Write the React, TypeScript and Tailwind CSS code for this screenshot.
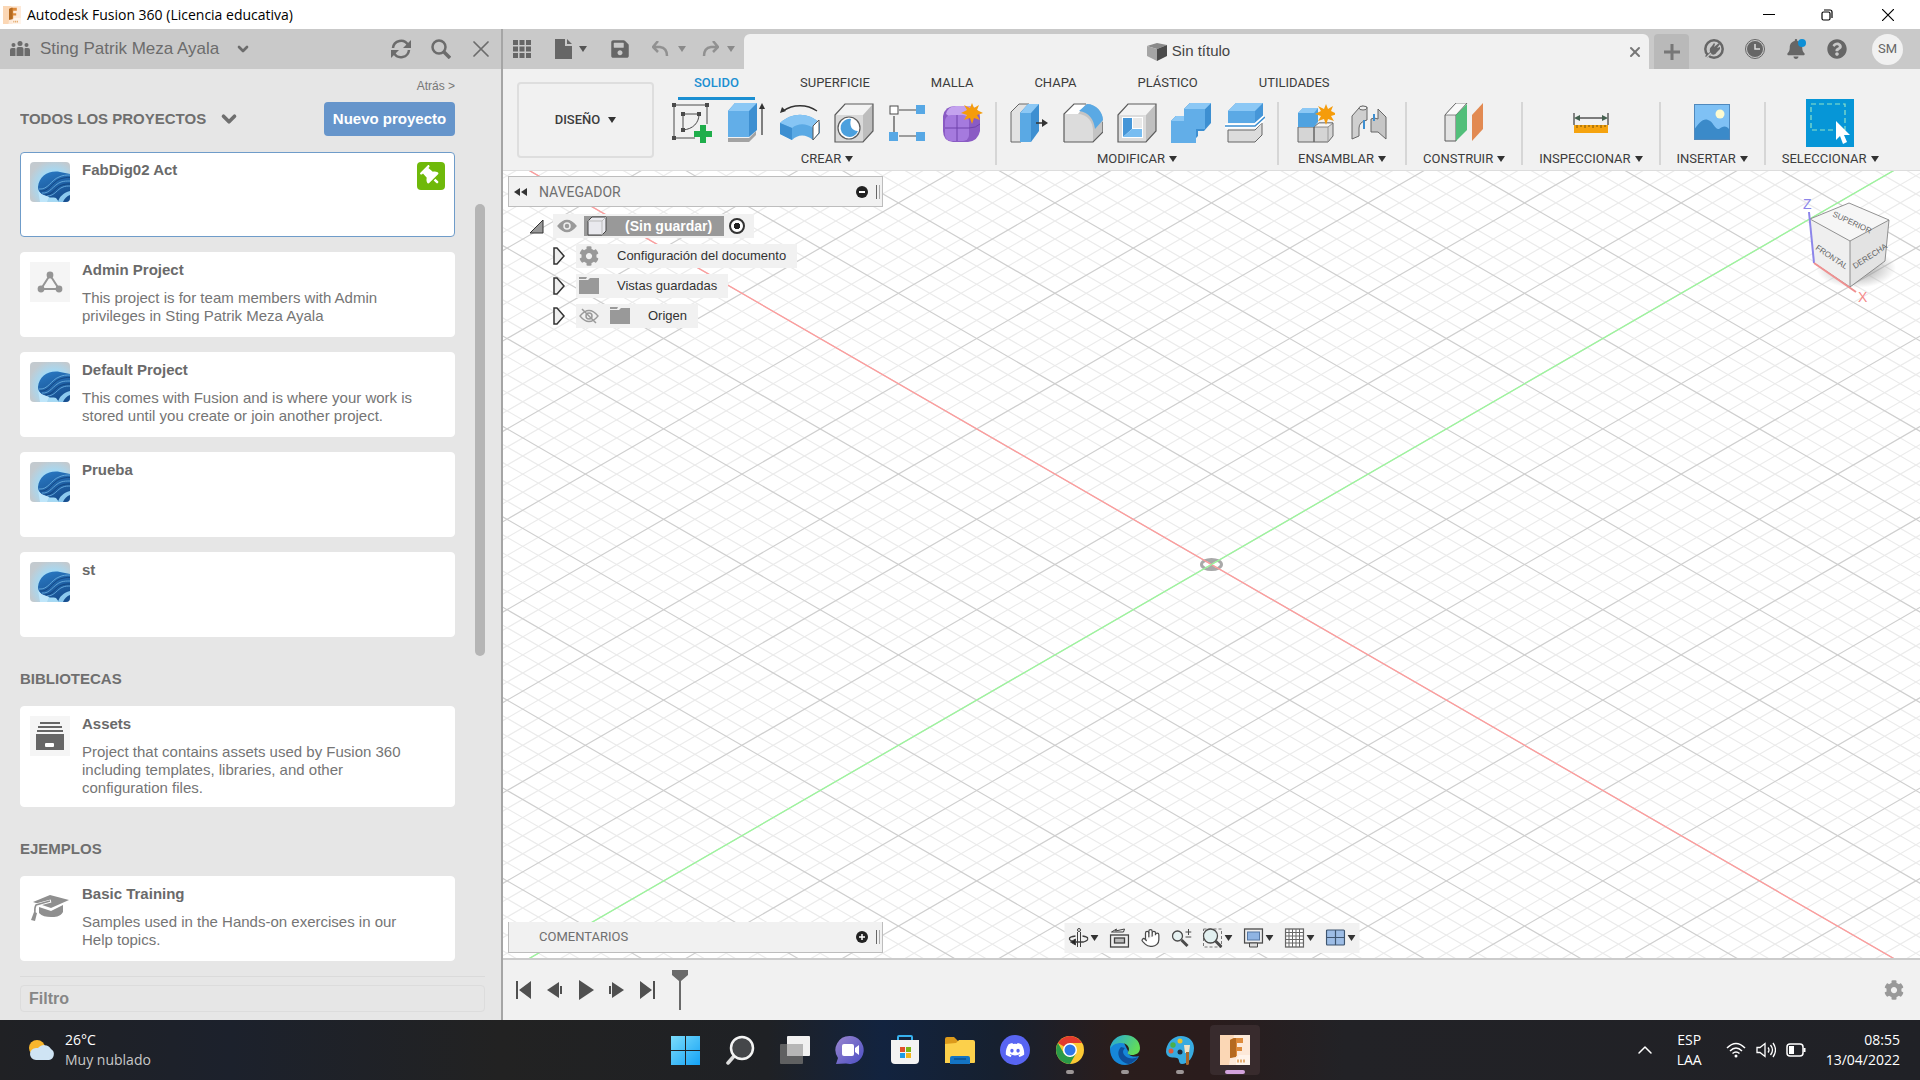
import React from 'react';
import { ChevronDown, ChevronUp, Hand, X } from 'lucide-react';
import { FaBell, FaCog, FaDiscord, FaQuestionCircle, FaSave } from 'react-icons/fa';
import { FaThumbtack } from 'react-icons/fa6';

type Drawing = () => React.ReactElement;

interface Project {
  name: string;
  description?: string;
  thumb: Drawing;
  pinned?: boolean;
}

interface ToolGroup {
  label: string;
  padding: string;
  tools: { name: string; icon: Drawing; active?: boolean }[];
}

/* ---------- Project thumbnails ---------- */

function WaveThumb() {
  return (
    <svg viewBox="0 0 40 40" className="h-10 w-10 rounded-sm">
      <defs>
        <radialGradient id="waveBg" cx="0.6" cy="0.6" r="0.65">
          <stop offset="0.55" stopColor="#a3daf6" />
          <stop offset="1" stopColor="#c3cacf" />
        </radialGradient>
        <linearGradient id="waveBody" x1="0" y1="0" x2="0.4" y2="1">
          <stop offset="0" stopColor="#2b7cc6" />
          <stop offset="1" stopColor="#174f90" />
        </linearGradient>
      </defs>
      <rect width="40" height="40" fill="url(#waveBg)" />
      <path d="M8 25C9 14 19 8 30 10l10 2v28H29l-3-4c-3-1-5 0-8-1-5-1-10-4-10-10z" fill="url(#waveBody)" />
      <path
        d="M9 27c9 1 12-9 20-12 4-2 7-2 11-2M12 31c8 1 11-8 19-11 3-1 6-1 9-1M17 34c8 0 10-7 16-9 2-1 5-1 7-1"
        fill="none"
        stroke="#6fb2e0"
        strokeWidth="1"
        opacity="0.85"
      />
      <path
        d="M10 29c9 1 12-9 20-12 4-1 7-2 10-1.500M15 33c8 0 10-8 17-10 3-1 5-1 8-1"
        fill="none"
        stroke="#0e3a73"
        strokeWidth="1"
        opacity="0.7"
      />
      <path d="M28 40c1-5 5-9 12-11v4c-3 1-6 4-7 7z" fill="#8cc9ee" />
      <path d="M8 28c3 5 7 5 11 7l-2 5h-7z" fill="#bfe6fa" />
    </svg>
  );
}

function AdminThumb() {
  return (
    <svg viewBox="0 0 40 40" className="h-10 w-10 bg-[#f5f5f5]">
      <path d="M20 13L11 27h18z" fill="none" stroke="#959595" strokeWidth="2" />
      <circle cx="20" cy="13" r="3.4" fill="#959595" />
      <circle cx="11" cy="27" r="3.4" fill="#959595" />
      <circle cx="29" cy="27" r="3.4" fill="#959595" />
    </svg>
  );
}

function AssetsThumb() {
  return (
    <svg viewBox="0 0 40 40" className="h-10 w-10 bg-[#f5f5f5]">
      <path d="M10 6h20v2H10zM8 10h24v2H8zM7 14h26v2H7zM6 18h28v16H6z" fill="#666" />
      <rect x="15" y="27" width="9" height="4" rx="1" fill="#fff" />
    </svg>
  );
}

function TrainingThumb() {
  return (
    <svg viewBox="0 0 40 40" className="h-10 w-10" fill="#8f8f8f">
      <path d="M3 16l17-7 19 5-18 8z" />
      <path d="M9 21l12 4 12-6v7c-3 5-8 5-12 5-5 0-9-1-12-4z" />
      <path d="M21 15L6 19c-2 4-1 8-2 15" fill="none" stroke="#fff" strokeWidth="3" />
      <path d="M20 15L6 19c-2 3-1 7-1 9" fill="none" stroke="#8f8f8f" strokeWidth="1.500" />
      <path d="M4 26l3 1-2 8-4-1z" />
    </svg>
  );
}

/* ---------- Ribbon icons ---------- */

function SketchIcon() {
  return (
    <svg viewBox="0 0 40 40" className="h-10 w-10">
      <path d="M2 2v33M2 2h33v19M2 35h21" fill="none" stroke="#4a4a4a" strokeWidth="1" />
      <path d="M0 0h4v4H0zM33 0h4v4h-4zM0 33h4v4H0zM9 9h4v4H9zM25 9h4v4h-4zM9 25h4v4H9z" fill="#4a4a4a" />
      <path d="M11 27V11h16c0 9-6 15-16 16z" fill="none" stroke="#4a4a4a" strokeWidth="1" />
      <path d="M28 22h6v6h6v6h-6v6h-6v-6h-6v-6h6z" fill="#1fae4b" />
    </svg>
  );
}

function ExtrudeIcon() {
  return (
    <svg viewBox="0 0 40 40" className="h-10 w-10">
      <path d="M2 35h21l7-7v4l-7 7H2z" fill="#a3a3a3" />
      <path d="M2 8l7-8h22v27l-8 7H2z" fill="#3d8fd1" />
      <path d="M2 8l7-8h22l-8 8z" fill="#8cc8f5" />
      <path d="M2 8h21v26H2z" fill="#62aee8" />
      <path d="M36 32V4" stroke="#333" strokeWidth="1.2" />
      <path d="M36 0l3 6h-6z" fill="#333" />
    </svg>
  );
}

function RevolveIcon() {
  return (
    <svg viewBox="0 0 40 40" className="h-10 w-10">
      <path d="M3 8C13 1 27 1 37 8" fill="none" stroke="#333" strokeWidth="1.3" />
      <path d="M0 10l2-6 4 4z" fill="#333" />
      <path d="M0 20c12-11 28-11 40 0v10l-7 7c-7-6-15-6-21 0L0 31z" fill="#5aa9e4" />
      <path d="M0 20c12-11 28-11 40 0l-7 5c-7-5-15-5-21 0z" fill="#86c5f4" />
      <path d="M33 23l6-6v13l-6 7z" fill="#fff" stroke="#555" />
      <path d="M0 20l12 5v12L0 31z" fill="#3d8fd1" />
    </svg>
  );
}

function HoleIcon() {
  return (
    <svg viewBox="0 0 40 40" className="h-10 w-10">
      <path d="M1 12L11 1h28v27L29 39H1z" fill="#bdbdbd" />
      <path d="M1 12L11 1h28L29 12z" fill="#f3f3f3" />
      <path d="M1 12h28v27H1z" fill="#d9d9d9" />
      <path d="M1 12L11 1h28v27L29 39H1z" fill="none" stroke="#5c5c5c" strokeWidth="1.2" />
      <circle cx="15" cy="25" r="11" fill="#fff" stroke="#5c5c5c" strokeWidth="1.2" />
      <path d="M17 16a9 9 0 1 0 7 12c-6 0-9-5-7-12z" fill="#4ba0de" />
    </svg>
  );
}

function PatternIcon() {
  return (
    <svg viewBox="0 0 40 40" className="h-10 w-10">
      <path d="M11 7h17M6 13v16M11 33h17" stroke="#4a4a4a" strokeWidth="1.2" />
      <rect x="2" y="3" width="8" height="8" fill="#fff" stroke="#4a4a4a" />
      <path d="M28 2h9v9h-9zM1 29h9v9H1zM28 29h9v9h-9z" fill="#57a8e5" />
    </svg>
  );
}

function Spark({ cx, cy }: { cx: number; cy: number }) {
  return (
    <path
      transform={`translate(${cx} ${cy})`}
      d="M0-10l2 5 5-3-2 5 6 3-6 2 3 5-6-2-2 6-2-6-6 2 3-5-6-2 6-3-3-5 6 3z"
      fill="#f59c0b"
    />
  );
}

function FormIcon() {
  return (
    <svg viewBox="0 0 40 40" className="h-10 w-10 overflow-visible">
      <path d="M1 13Q3 3 13 3h14q11 2 11 12v13q-2 10-12 11H11Q1 38 1 28z" fill="#8a5bc4" />
      <path d="M4 11Q6 3 14 3h13q7 1 8 6l-8 5H8z" fill="#c3a2ee" />
      <rect x="3" y="12" width="24" height="26" rx="6" fill="#a57ade" />
      <path d="M15 12v26M3 25h24q7 0 11-4" fill="none" stroke="#6f42ab" strokeWidth="1" />
      <Spark cx={30} cy={10} />
    </svg>
  );
}

function PressPullIcon() {
  return (
    <svg viewBox="0 0 40 40" className="h-10 w-10">
      <path d="M2 39V9l8-8h10l-8 8v30z" fill="#e2e2e2" stroke="#666" />
      <path d="M11 10l8-9h11v27l-8 11H11z" fill="#3d8fd1" />
      <path d="M11 10l8-9h11l-8 9z" fill="#8cc8f5" />
      <path d="M11 10h11v29H11z" fill="#5aa9e4" />
      <path d="M27 20h8" stroke="#333" strokeWidth="1.5" />
      <path d="M33 16l6 4-6 4z" fill="#333" />
    </svg>
  );
}

function FilletIcon() {
  return (
    <svg viewBox="0 0 40 40" className="h-10 w-10">
      <path d="M1 39V11L11 1h12c10 0 17 8 17 18v10L30 39z" fill="#c4c4c4" />
      <path d="M1 11L11 1h12l-8 10z" fill="#fff" />
      <path d="M1 39V11h13c11 0 16 8 16 17v11z" fill="#dcdcdc" />
      <path d="M16 8l8-7c9 0 16 8 16 16l-8 9c-1-9-6-17-16-18z" fill="#5aa9e4" />
      <path d="M1 39V11L11 1h12M40 19v10L30 39H1" fill="none" stroke="#5c5c5c" strokeWidth="1.2" />
    </svg>
  );
}

function ShellIcon() {
  return (
    <svg viewBox="0 0 40 40" className="h-10 w-10">
      <path d="M1 12L11 1h28v27L29 39H1z" fill="#c0c0c0" />
      <path d="M1 12L11 1h28L29 12z" fill="#f3f3f3" />
      <path d="M1 12h28v27H1z" fill="#dcdcdc" />
      <path d="M1 12L11 1h28v27L29 39H1z" fill="none" stroke="#5c5c5c" strokeWidth="1.2" />
      <path d="M5 14h21v21H5z" fill="#fff" />
      <path d="M6 15h9v11l-9 8z" fill="#4596d8" />
      <path d="M6 34l9-8h10v8z" fill="#78bdf1" />
      <path d="M16 15h9v10h-9z" fill="#e8e8e8" />
    </svg>
  );
}

function CombineIcon() {
  return (
    <svg viewBox="0 0 40 40" className="h-10 w-10">
      <path d="M0 18l5-5h8V6l6-6h21v20l-7 8h-6v5l-7 7H0z" fill="#3d8fd1" />
      <path d="M0 18l5-5h8V6l6-6h21l-6 6v20h-9v14H0z" fill="#62aee8" />
      <path d="M13 6l6-6h21l-6 6zM0 18l5-5h8v5z" fill="#8cc8f5" />
    </svg>
  );
}

function SplitIcon() {
  return (
    <svg viewBox="0 0 40 40" className="h-10 w-10">
      <path d="M3 8l8-8h27v13l-8 7H3z" fill="#4596d8" />
      <path d="M3 8h27v12H3z" fill="#5ba9e5" />
      <path d="M3 8l8-8h27l-8 8z" fill="#8cc8f5" />
      <path d="M3 27h27l7-7v12l-7 7H3z" fill="#dcdcdc" stroke="#666" />
      <path d="M0 23h30l10-9" fill="none" stroke="#fff" strokeWidth="5" />
      <path d="M0 23h30l10-9" fill="none" stroke="#3d8fd1" strokeWidth="1.6" />
    </svg>
  );
}

function NewComponentIcon() {
  return (
    <svg viewBox="0 0 40 40" className="h-10 w-10">
      <path d="M3 24h16v15H3zM19 24l5-4h14v13l-5 6H19z" fill="#d5d5d5" stroke="#666" />
      <path d="M19 24l5-4h14l-5 4z" fill="#f5f5f5" stroke="#666" strokeWidth="0.7" />
      <path d="M33 24v15" stroke="#999" />
      <path d="M3 10l5-5h15v14l-4 5H3z" fill="#4fa2e0" />
      <path d="M3 10l5-5h15l-4 5z" fill="#8cc8f5" />
      <Spark cx={31} cy={11} />
    </svg>
  );
}

function JointIcon() {
  return (
    <svg viewBox="0 0 40 40" className="h-10 w-10">
      <path d="M3 36V13l7-8q3-3 8-1v13q-8 2-8 8v8z" fill="#cfcfcf" stroke="#666" />
      <path d="M37 36l-8-7h-7V16q3-2 7 0V6l8 8z" fill="#c6c6c6" stroke="#666" />
      <path d="M15 17v9M25 11v7" stroke="#3d8fd1" strokeWidth="2" />
      <ellipse cx="14" cy="5" rx="4" ry="2" fill="#eee" stroke="#666" />
    </svg>
  );
}

function PlaneIcon() {
  return (
    <svg viewBox="0 0 40 40" className="h-10 w-10">
      <path d="M1 38V12L12 0h11L12 12v26z" fill="#e4e4e4" stroke="#5c5c5c" />
      <path d="M12 12h-11L12 0h11z" fill="#fafafa" stroke="#5c5c5c" strokeWidth="0.7" />
      <path d="M12 12L23 1v26L12 38z" fill="#52bf7a" />
      <path d="M28 12L39 0v26L28 38z" fill="#e28a52" />
    </svg>
  );
}

function MeasureIcon() {
  return (
    <svg viewBox="0 0 40 40" className="h-10 w-10">
      <path d="M3 10v12M37 10v12M5 15h30" stroke="#555" strokeWidth="1.4" />
      <path d="M3 15l6-3v6zM37 15l-6-3v6z" fill="#44604f" />
      <rect x="3" y="22" width="34" height="8" fill="#f5a30f" />
      <path d="M6 22v3M10 22v2M14 22v3M18 22v2M22 22v3M26 22v2M30 22v3M34 22v2" stroke="#7b5305" />
    </svg>
  );
}

function ImageIcon() {
  return (
    <svg viewBox="0 0 40 40" className="h-10 w-10">
      <rect x="2" y="1" width="36" height="36" fill="#7fc1f5" />
      <circle cx="28" cy="11" r="4.5" fill="#fdfbd0" />
      <path d="M2 27c5-7 9-12 14-10 5 1 7 10 11 9 4-3 7-4 11 1v10H2z" fill="#3b8ac9" />
      <rect x="2.500" y="1.500" width="35" height="35" fill="none" stroke="#5089bd" />
    </svg>
  );
}

function SelectIcon() {
  return (
    <svg viewBox="0 0 48 48" className="h-12 w-12 bg-[#0696d7]">
      <rect x="5" y="5" width="34" height="26" fill="none" stroke="#8fe3c8" strokeWidth="1.2" strokeDasharray="5 3" />
      <path d="M30 22v19l4-4 3 8 4-2-3-7h6z" fill="#fff" />
    </svg>
  );
}

/* ---------- View bar icons ---------- */

function OrbitIcon() {
  return (
    <svg viewBox="0 0 20 20" className="h-5 w-5" fill="none" stroke="#3f3f3f">
      <path d="M9 4v15M12 4v15" />
      <circle cx="10.500" cy="2" r="1.500" />
      <path d="M7 8C-1 9-1 12 6 14M14 8c7 1 7 4 1 6H4" strokeWidth="1.300" />
      <path d="M2 14l5-3v6z" fill="#222" />
    </svg>
  );
}

function LookAtIcon() {
  return (
    <svg viewBox="0 0 20 20" className="h-5 w-5" fill="none" stroke="#3f3f3f">
      <rect x="1" y="7" width="18" height="12" fill="#eee" strokeWidth="1.300" />
      <rect x="5" y="10" width="10" height="5" fill="#bbb" strokeWidth="1.300" />
      <path d="M2 4l5-3-1 2 9-2-1 3M2 4h12" />
    </svg>
  );
}

function ZoomIcon() {
  return (
    <svg viewBox="0 0 20 20" className="h-5 w-5" fill="none" stroke="#4a4a4a">
      <circle cx="6" cy="8" r="5" fill="#e6f1f1" strokeWidth="1.300" />
      <path d="M10 12l6 6" strokeWidth="3" />
      <path d="M14 4h6M17 1v6M14 9h6" />
    </svg>
  );
}

function FitIcon() {
  return (
    <svg viewBox="0 0 20 20" className="h-5 w-5" fill="none" stroke="#4a4a4a">
      <rect x="1" y="1" width="18" height="18" strokeDasharray="3 2" stroke="#777" />
      <circle cx="8" cy="8" r="7" fill="#e2f0f0" strokeWidth="1.300" />
      <path d="M13 13l6 6" strokeWidth="3" />
    </svg>
  );
}

function DisplayIcon() {
  return (
    <svg viewBox="0 0 20 20" className="h-5 w-5" fill="none" stroke="#4a4a4a">
      <rect x="1" y="1" width="18" height="14" fill="#eee" strokeWidth="1.300" />
      <rect x="4" y="4" width="12" height="8" fill="#8fb4e3" stroke="#5678a5" />
      <path d="M6 19h8v-4H6z" fill="#ddd" />
    </svg>
  );
}

function GridIcon() {
  return (
    <svg viewBox="0 0 20 20" className="h-5 w-5" fill="#fff" stroke="#666">
      <rect x="1" y="1" width="18" height="18" strokeWidth="1.300" />
      <path d="M4.500 1v18M8 1v18M11.500 1v18M15 1v18M1 4.500h18M1 8h18M1 11.500h18M1 15h18" />
    </svg>
  );
}

function ViewportsIcon() {
  return (
    <svg viewBox="0 0 20 20" className="h-5 w-5" fill="#9dbde6" stroke="#3d5570" strokeWidth="1.200">
      <rect x="1" y="2" width="18" height="15" rx="1" />
      <path d="M10 2v15M1 9.500h18" />
    </svg>
  );
}

/* ---------- Taskbar icons ---------- */

function StartIcon() {
  return (
    <svg viewBox="0 0 30 30" className="h-[30px] w-[30px]">
      <defs>
        <linearGradient id="win" x1="0" y1="0" x2="1" y2="1">
          <stop offset="0" stopColor="#7bdcfb" />
          <stop offset="1" stopColor="#14a2f5" />
        </linearGradient>
      </defs>
      <path d="M1 1h14v14H1zM16 1h14v14H16zM1 16h14v14H1zM16 16h14v14H16z" fill="url(#win)" />
    </svg>
  );
}

function SearchAppIcon() {
  return (
    <svg viewBox="0 0 30 30" className="h-[30px] w-[30px]">
      <path d="M10 20l-7 8" stroke="#ddd" strokeWidth="3.500" strokeLinecap="round" />
      <circle cx="17" cy="13" r="11" fill="#45474a" stroke="#f4f4f4" strokeWidth="2.500" />
    </svg>
  );
}

function TaskViewIcon() {
  return (
    <svg viewBox="0 0 30 30" className="h-[30px] w-[30px]">
      <rect x="7" y="1" width="23" height="20" rx="1" fill="#f1f1f1" />
      <rect x="0" y="9" width="23" height="20" rx="1" fill="#6b6b6b" opacity="0.85" />
      <rect x="7" y="9" width="16" height="12" fill="#b6b6b6" />
    </svg>
  );
}

function ChatIcon() {
  return (
    <svg viewBox="0 0 30 30" className="h-[30px] w-[30px]">
      <defs>
        <linearGradient id="chat" x1="0" y1="0" x2="1" y2="1">
          <stop offset="0" stopColor="#9a86cf" />
          <stop offset="1" stopColor="#4c4fc4" />
        </linearGradient>
      </defs>
      <path d="M15 1a14 14 0 1 1-4 27.500L1 29l2-6A14 14 0 0 1 15 1z" fill="url(#chat)" />
      <rect x="7" y="9" width="12" height="12" rx="2" fill="#fff" />
      <path d="M20 13l4-3v10l-4-3z" fill="#fff" />
    </svg>
  );
}

function StoreIcon() {
  return (
    <svg viewBox="0 0 30 30" className="h-[30px] w-[30px]">
      <path d="M8 6V2q0-1 1-1h12q1 0 1 1v4" fill="none" stroke="#37b1ee" strokeWidth="2" />
      <path d="M1 5h28v20q0 4-4 4H5q-4 0-4-4z" fill="#f3f3f3" />
      <path d="M10 12h5v5h-5z" fill="#e0502a" />
      <path d="M16 12h5v5h-5z" fill="#7cb518" />
      <path d="M10 18h5v5h-5z" fill="#1c9be6" />
      <path d="M16 18h5v5h-5z" fill="#f5b61b" />
    </svg>
  );
}

function ExplorerIcon() {
  return (
    <svg viewBox="0 0 30 30" className="h-[30px] w-[30px]">
      <path d="M0 4q0-2 2-2h7l4 4v6H0z" fill="#dc9a1b" />
      <path d="M0 9l11-1 3-3h14q2 0 2 2v20q0 1-1 1H0z" fill="#fcd04b" />
      <path d="M5 29v-6q0-2 2-2h16q2 0 2 2v6z" fill="#1474c4" />
      <path d="M9 24h12" stroke="#0a4f91" strokeWidth="1.500" />
    </svg>
  );
}

function DiscordIcon() {
  return (
    <div className="flex h-[30px] w-[30px] items-center justify-center rounded-full bg-[#5865f2]">
      <FaDiscord className="h-5 w-5 text-white" />
    </div>
  );
}

function ChromeIcon() {
  return (
    <svg viewBox="0 0 30 30" className="h-[30px] w-[30px]">
      <circle cx="15" cy="15" r="14" fill="#fcc934" />
      <path d="M15 15L2.900 8A14 14 0 0 1 27.100 8H15z" fill="#e33b2e" />
      <path d="M15 29A14 14 0 0 1 2.900 8L9 18.500 15 22l6-3.500z" fill="#2a9a48" />
      <circle cx="15" cy="15" r="7" fill="#fff" />
      <circle cx="15" cy="15" r="5.500" fill="#2f77e8" />
    </svg>
  );
}

function EdgeIcon() {
  return (
    <svg viewBox="0 0 30 30" className="h-[30px] w-[30px]">
      <defs>
        <linearGradient id="edgeTop" x1="0" y1="0" x2="1" y2="0.400">
          <stop offset="0" stopColor="#22a5e0" />
          <stop offset="1" stopColor="#62dc5a" />
        </linearGradient>
      </defs>
      <path d="M0 14C0 7 8 3 14 8l4 8c-1 3 3 7 11 5-2 5-8 9-14 9C6 30 0 23 0 14z" fill="#1687d9" />
      <path d="M0 14C1 5 8 0 15 0c9 0 15 6 15 13 0 5-4 7-8 7-3 0-5-1-4-3 3-4-1-9-7-9-5 0-9 2-11 6z" fill="url(#edgeTop)" />
      <path d="M11 12c-6 6-1 16 8 17 3-1 7-4 9-7-6 3-14 1-15-5 0-2 1-3 2-4z" fill="#0e4f9c" />
    </svg>
  );
}

function PaintIcon() {
  return (
    <svg viewBox="0 0 30 30" className="h-[30px] w-[30px]">
      <path d="M16 1c8 0 13 5 13 12 0 9-6 16-12 16-4 0-2-5-5-6S2 24 1 17C1 9 7 1 16 1z" fill="#38abe0" />
      <circle cx="15" cy="17" r="2.500" fill="#1f2b3a" />
      <circle cx="15" cy="6" r="2.500" fill="#e9c12c" />
      <circle cx="8" cy="10" r="2.700" fill="#49b04a" />
      <circle cx="6" cy="16" r="2.500" fill="#e05b3a" />
      <path d="M19 10h6l-1 8h-4z" fill="#efe2c6" />
      <path d="M21 17h3v12l-2 2-1-2z" fill="#a8682b" />
    </svg>
  );
}

function FusionIcon({ className }: { className: string }) {
  return (
    <svg viewBox="0 0 30 30" className={className}>
      <rect width="30" height="30" fill="#fde9d8" />
      <path d="M0 0h14L9 30H0z" fill="#fbd7b5" />
      <path d="M10 5l4-2h9v5h-6v4h5v4h-5v5l-7 2z" fill="#dd8a3a" />
      <path d="M10 5l4-2h2v19l-6 1z" fill="#b56a20" />
      <path d="M19 20h11v10H16v-6z" fill="#fff4ea" />
      <path d="M17 26h8" stroke="#e6ae73" strokeWidth="3" strokeDasharray="2 1" />
    </svg>
  );
}

function WeatherIcon() {
  return (
    <svg viewBox="0 0 28 24" className="h-6 w-7">
      <circle cx="9" cy="10" r="8" fill="#f8b62d" />
      <path d="M8 22a6 6 0 0 1 0-12h2a8 8 0 0 1 13 1 6 6 0 0 1-2 11z" fill="#cfe4f4" />
    </svg>
  );
}

/* ---------- Data ---------- */

const projects: Project[] = [
  { name: 'FabDig02 Act', thumb: WaveThumb, pinned: true },
  {
    name: 'Admin Project',
    description: 'This project is for team members with Admin privileges in Sting Patrik Meza Ayala',
    thumb: AdminThumb
  },
  {
    name: 'Default Project',
    description: 'This comes with Fusion and is where your work is stored until you create or join another project.',
    thumb: WaveThumb
  },
  { name: 'Prueba', thumb: WaveThumb },
  { name: 'st', thumb: WaveThumb }
];

const libraries: Project[] = [
  {
    name: 'Assets',
    description: 'Project that contains assets used by Fusion 360 including templates, libraries, and other configuration files.',
    thumb: AssetsThumb
  }
];

const samples: Project[] = [
  {
    name: 'Basic Training',
    description: 'Samples used in the Hands-on exercises in our Help topics.',
    thumb: TrainingThumb
  },
  { name: '', thumb: TrainingThumb }
];

const tabs = ['SOLIDO', 'SUPERFICIE', 'MALLA', 'CHAPA', 'PLÁSTICO', 'UTILIDADES'];

const toolGroups: ToolGroup[] = [
  {
    label: 'CREAR',
    padding: 'px-[13px]',
    tools: [
      { name: 'Crear boceto', icon: SketchIcon },
      { name: 'Extruir', icon: ExtrudeIcon },
      { name: 'Revolución', icon: RevolveIcon },
      { name: 'Agujero', icon: HoleIcon },
      { name: 'Patrón rectangular', icon: PatternIcon },
      { name: 'Crear forma', icon: FormIcon }
    ]
  },
  {
    label: 'MODIFICAR',
    padding: 'px-3',
    tools: [
      { name: 'Pulsar/Tirar', icon: PressPullIcon },
      { name: 'Empalme', icon: FilletIcon },
      { name: 'Vaciado', icon: ShellIcon },
      { name: 'Combinar', icon: CombineIcon },
      { name: 'Dividir cuerpo', icon: SplitIcon }
    ]
  },
  {
    label: 'ENSAMBLAR',
    padding: 'px-4',
    tools: [
      { name: 'Nuevo componente', icon: NewComponentIcon },
      { name: 'Unión', icon: JointIcon }
    ]
  },
  { label: 'CONSTRUIR', padding: 'px-4', tools: [{ name: 'Plano de desfase', icon: PlaneIcon }] },
  { label: 'INSPECCIONAR', padding: 'px-4', tools: [{ name: 'Medir', icon: MeasureIcon }] },
  { label: 'INSERTAR', padding: 'px-4', tools: [{ name: 'Lienzo', icon: ImageIcon }] },
  { label: 'SELECCIONAR', padding: 'px-4', tools: [{ name: 'Seleccionar', icon: SelectIcon, active: true }] }
];

const viewTools: { name: string; icon: Drawing; menu?: boolean }[] = [
  { name: 'Órbita', icon: OrbitIcon, menu: true },
  { name: 'Mirar a', icon: LookAtIcon },
  { name: 'Encuadre', icon: () => <Hand className="h-5 w-5 text-[#4a4a4a]" fill="#fff" strokeWidth={1.5} /> },
  { name: 'Zoom', icon: ZoomIcon },
  { name: 'Ajustar', icon: FitIcon, menu: true },
  { name: 'Configuración de visualización', icon: DisplayIcon, menu: true },
  { name: 'Rejilla', icon: GridIcon, menu: true },
  { name: 'Ventanas gráficas', icon: ViewportsIcon, menu: true }
];

const taskbarApps: { name: string; icon: Drawing; running?: boolean; active?: boolean }[] = [
  { name: 'Inicio', icon: StartIcon },
  { name: 'Buscar', icon: SearchAppIcon },
  { name: 'Vista de tareas', icon: TaskViewIcon },
  { name: 'Chat', icon: ChatIcon },
  { name: 'Microsoft Store', icon: StoreIcon },
  { name: 'Explorador', icon: ExplorerIcon },
  { name: 'Discord', icon: DiscordIcon },
  { name: 'Chrome', icon: ChromeIcon, running: true },
  { name: 'Edge', icon: EdgeIcon, running: true },
  { name: 'Paint', icon: PaintIcon, running: true },
  { name: 'Fusion 360', icon: () => <FusionIcon className="h-[30px] w-[30px]" />, active: true }
];

/* ---------- Components ---------- */

function Caret({ className = 'text-[#333]' }: { className?: string }) {
  return (
    <svg viewBox="0 0 8 6" className={`h-[6px] w-2 shrink-0 ${className}`}>
      <path d="M0 0h8L4 6z" fill="currentColor" />
    </svg>
  );
}

function TitleBar() {
  return (
    <header className="flex h-[29px] shrink-0 items-center bg-white pl-[3px] font-['Open_Sans',sans-serif]">
      <FusionIcon className="h-[18px] w-[18px]" />
      <h1 className="flex-1 pl-[6px] text-sm text-black">Autodesk Fusion 360 (Licencia educativa)</h1>
      <button aria-label="Minimizar" className="flex h-full w-[58px] items-center justify-center">
        <span className="h-px w-3 bg-black"></span>
      </button>
      <button aria-label="Restaurar" className="flex h-full w-[58px] items-center justify-center">
        <svg viewBox="0 0 12 12" className="h-3 w-3" fill="none" stroke="#000" strokeWidth="1.200">
          <rect x="1" y="3" width="8" height="8" rx="1.500" />
          <path d="M3 1h6q2 0 2 2v6" />
        </svg>
      </button>
      <button aria-label="Cerrar" className="flex h-full w-16 items-center justify-center">
        <svg viewBox="0 0 12 12" className="h-3 w-3" stroke="#000" strokeWidth="1.200">
          <path d="M0 0l12 12M12 0L0 12" />
        </svg>
      </button>
    </header>
  );
}

function ProjectCard({ project }: { project: Project }) {
  const Thumb = project.thumb;
  return (
    <li
      className={`flex min-h-[85px] items-start rounded-sm border bg-white p-[9px] ${
        project.pinned ? 'border-[#6f9cc9]' : 'border-white'
      }`}
    >
      <Thumb />
      <div className="min-w-0 flex-1 pl-3">
        <h3 className="text-[15px] leading-[15px] font-bold text-[#6a6a6a]">{project.name}</h3>
        {project.description && (
          <p className="mt-3 pr-5 text-[15px] leading-[18px] text-[#757575]">{project.description}</p>
        )}
      </div>
      {project.pinned && (
        <button aria-label="Anclado" className="flex h-7 w-7 items-center justify-center rounded-sm bg-[#6fb90a]">
          <FaThumbtack className="h-5 w-5 -rotate-45 text-white" />
        </button>
      )}
    </li>
  );
}

function SectionTitle({ children }: { children: React.ReactNode }) {
  return <h2 className="pt-[33px] pb-[18px] text-[15px] leading-[18px] font-bold text-[#6f6f6f]">{children}</h2>;
}

function DataPanel() {
  return (
    <aside className="flex w-[503px] shrink-0 flex-col border-r-2 border-[#a5a5a5] bg-[#e6e6e6] font-['Liberation_Sans',Arial,sans-serif]">
      <div className="flex h-10 shrink-0 items-center bg-[#c9c9c9] pl-[10px] text-[#6c6c6c]">
        <svg viewBox="0 0 20 16" className="h-4 w-5" fill="currentColor">
          <circle cx="10" cy="2.500" r="2.500" />
          <circle cx="3.500" cy="4" r="2" />
          <circle cx="16.500" cy="4" r="2" />
          <path d="M6.500 8q0-2 2-2h3q2 0 2 2v7h-7zM0 9q0-2 2-2h2.500q1 0 1 1v7H0zM14.500 8q0-1 1-1H18q2 0 2 2v6h-5.500z" />
        </svg>
        <button className="flex items-center gap-4 pl-[10px] text-[17px]">
          Sting Patrik Meza Ayala
          <ChevronDown className="h-4 w-4" strokeWidth={4} />
        </button>
        <div className="ml-auto flex">
          <button aria-label="Actualizar" className="flex h-10 w-10 items-center justify-center">
            <svg viewBox="0 0 20 20" className="h-5 w-5" fill="none" stroke="currentColor" strokeWidth="2.500">
              <path d="M2 9a8 8 0 0 1 15-3M18 11a8 8 0 0 1-15 3" />
              <path d="M20 1v8h-8zM0 19v-8h8z" fill="currentColor" stroke="none" />
            </svg>
          </button>
          <button aria-label="Buscar" className="flex h-10 w-10 items-center justify-center">
            <svg viewBox="0 0 20 20" className="h-5 w-5" fill="none" stroke="currentColor">
              <circle cx="8" cy="8" r="6.500" strokeWidth="2.500" />
              <path d="M13 13l6 6" strokeWidth="3.500" />
            </svg>
          </button>
          <button aria-label="Cerrar panel" className="flex h-10 w-10 items-center justify-center">
            <X className="h-7 w-7" strokeWidth={1.5} />
          </button>
        </div>
      </div>

      <div className="flex min-h-0 flex-1 justify-between pr-4 pl-5">
        <div className="flex w-[435px] flex-col overflow-hidden">
          <a href="#atras" className="mt-2 self-end text-xs leading-[18px] text-[#777]">
            Atrás &gt;
          </a>
          <div className="mt-[7px] mb-4 flex items-center justify-between">
            <button className="flex items-center gap-3 text-[15px] font-bold text-[#6f6f6f]">
              TODOS LOS PROYECTOS
              <ChevronDown className="h-[22px] w-[22px]" strokeWidth={4} />
            </button>
            <button className="h-[34px] w-[131px] rounded-sm bg-[#6695cb] text-[15px] font-bold text-white">
              Nuevo proyecto
            </button>
          </div>
          <ul className="flex flex-col gap-[15px]">
            {projects.map((project) => (
              <ProjectCard key={project.name} project={project} />
            ))}
          </ul>
          <SectionTitle>BIBLIOTECAS</SectionTitle>
          <ul className="flex flex-col gap-[15px]">
            {libraries.map((project) => (
              <ProjectCard key={project.name} project={project} />
            ))}
          </ul>
          <SectionTitle>EJEMPLOS</SectionTitle>
          <ul className="flex flex-col gap-[15px]">
            {samples.map((project) => (
              <ProjectCard key={project.name} project={project} />
            ))}
          </ul>
        </div>
        <div className="mt-[135px] h-[452px] w-[10px] rounded-full bg-[#b5b5b5]"></div>
      </div>

      <div className="mr-4 ml-5 shrink-0 border-t border-[#dadada] pt-2 pb-2">
        <input
          type="text"
          aria-label="Filtro"
          placeholder="Filtro"
          className="h-[27px] w-full rounded border border-[#dcdcdc] bg-transparent px-2 text-base font-bold text-[#777] placeholder:text-[#868686]"
        />
      </div>
    </aside>
  );
}

function TabStrip() {
  return (
    <div className="flex h-10 shrink-0 items-end bg-[#c9c9c9] text-[#666]">
      <div className="flex h-10 w-[241px] items-center pl-[10px]">
        <button aria-label="Paneles">
          <svg viewBox="0 0 18 18" className="h-[18px] w-[18px]" fill="currentColor">
            <path d="M0 0h5v5H0zM6.500 0h5v5h-5zM13 0h5v5h-5zM0 6.500h5v5H0zM6.500 6.500h5v5h-5zM13 6.500h5v5h-5zM0 13h5v5H0zM6.500 13h5v5h-5zM13 13h5v5h-5z" />
          </svg>
        </button>
        <button aria-label="Archivo" className="ml-6 flex items-center gap-[7px]">
          <svg viewBox="0 0 17 20" className="h-5 w-[17px]" fill="currentColor">
            <path d="M0 0h10v7h7v13H0zM12 0l5 5h-5z" />
          </svg>
          <Caret className="text-[#555]" />
        </button>
        <button aria-label="Guardar" className="ml-[23px]">
          <FaSave className="h-5 w-5" />
        </button>
        <button aria-label="Deshacer" className="ml-[22px] flex items-center gap-[9px] text-[#919191]">
          <svg viewBox="0 0 17 16" className="h-4 w-[17px]" fill="none" stroke="currentColor" strokeWidth="2.500">
            <path d="M6 0L1 6l5 5M1 6h7q7 1 7 9" />
          </svg>
          <Caret className="text-[#8a8a8a]" />
        </button>
        <button aria-label="Rehacer" className="ml-4 flex items-center gap-2 text-[#919191]">
          <svg viewBox="0 0 17 16" className="h-4 w-[17px]" fill="none" stroke="currentColor" strokeWidth="2.500">
            <path d="M11 0l5 6-5 5M16 6H9q-7 1-7 9" />
          </svg>
          <Caret className="text-[#8a8a8a]" />
        </button>
      </div>
      <div className="flex h-[35px] flex-1 items-center rounded-t-md bg-[#f1f1f1] pr-[6px] pl-[6px]">
        <div className="flex flex-1 items-center justify-center gap-[5px] font-['Liberation_Sans',Arial,sans-serif] text-[15px] text-[#444]">
          <svg viewBox="0 0 20 20" className="h-5 w-5">
            <path d="M0 4l10-3 10 2-10 4z" fill="#8a8a8a" />
            <path d="M0 4l10 3v12L0 14z" fill="#a5a5a5" />
            <path d="M10 7l10-4v11l-10 5z" fill="#4b4b4b" />
          </svg>
          Sin título
        </div>
        <button aria-label="Cerrar documento">
          <X className="h-4 w-4 text-[#777]" strokeWidth={3} />
        </button>
      </div>
      <button
        aria-label="Nuevo diseño"
        className="ml-[5px] flex h-[35px] w-[35px] items-center justify-center rounded-t bg-[#b9b9b9]"
      >
        <svg viewBox="0 0 16 16" className="h-4 w-4" stroke="#777" strokeWidth="3">
          <path d="M8 0v16M0 8h16" />
        </svg>
      </button>
      <div className="flex h-10 items-center pr-[17px] pl-[15px]">
        <button aria-label="Extensiones">
          <svg viewBox="0 0 20 20" className="h-5 w-5">
            <circle cx="10" cy="10" r="8.700" fill="none" stroke="currentColor" strokeWidth="2.500" />
            <path d="M1 17l5-4q-1-4 2-6l2-3 1 1-1 3 5-4 1 1-3 4 3-1v2l-3 3q-2 4-6 2l-4 4z" fill="currentColor" />
            <path d="M2 19l5-5" stroke="#c9c9c9" strokeWidth="1.500" />
          </svg>
        </button>
        <button aria-label="Estado del trabajo" className="ml-[21px]">
          <svg viewBox="0 0 20 20" className="h-5 w-5">
            <circle cx="10" cy="10" r="9.500" fill="none" stroke="currentColor" />
            <circle cx="10" cy="10" r="8" fill="currentColor" />
            <path d="M10 5v5h5" fill="none" stroke="#ddd" strokeWidth="1.500" />
          </svg>
        </button>
        <button aria-label="Notificaciones" className="relative ml-[21px]">
          <FaBell className="h-5 w-5" />
          <span className="absolute top-0 right-0 h-2 w-2 rounded-full bg-[#0d8fd6]"></span>
        </button>
        <button aria-label="Ayuda" className="ml-[21px]">
          <FaQuestionCircle className="h-5 w-5" />
        </button>
        <button className="ml-[25px] h-[31px] w-[31px] rounded-full bg-[#f1f1f1] font-['Roboto',sans-serif] text-[13px] text-[#666]">
          SM
        </button>
      </div>
    </div>
  );
}

function Ribbon() {
  return (
    <div className="flex h-[102px] shrink-0 border-b border-[#ddd] bg-[#f1f1f1] pl-[14px] font-['Roboto',sans-serif] text-[13px] text-[#3c3c3c]">
      <button className="mt-[13px] flex h-[76px] w-[137px] items-center justify-center gap-2 rounded border-2 border-[#dedede] font-medium">
        DISEÑO
        <Caret />
      </button>
      <div className="ml-[5px] flex-1">
        <nav className="flex gap-[29px] pl-[19px]">
          {tabs.map((tab, index) => (
            <button
              key={tab}
              className={`h-[31px] border-b-[3px] px-4 ${
                index === 0 ? 'border-[#1b8fd2] font-medium text-[#1b8fd2]' : 'border-transparent'
              }`}
            >
              {tab}
            </button>
          ))}
        </nav>
        <div className="flex">
          {toolGroups.map((group, index) => (
            <div
              key={group.label}
              className={`mt-[2px] flex h-[63px] flex-col items-center border-[#d6d6d6] ${group.padding} ${
                index === 0 ? '' : 'border-l-2'
              }`}
            >
              <div className="flex h-[49px] shrink-0 items-center gap-[14px] pb-2">
                {group.tools.map((tool) => (
                  <button key={tool.name} aria-label={tool.name} className="flex h-10 min-w-10 items-center justify-center">
                    <tool.icon />
                  </button>
                ))}
              </div>
              <button className="flex items-center gap-1 leading-4">
                {group.label}
                <Caret />
              </button>
            </div>
          ))}
        </div>
      </div>
    </div>
  );
}

const GRID_STEPS = Array.from({ length: 111 }, (_, i) => i - 55);

// Isometric ground plane, kept centred on the origin of the model
function GroundGrid() {
  const reach = 1600;
  const rise = reach * 0.5775;
  return (
    <svg className="absolute inset-0 h-full w-full" aria-hidden="true">
      <svg x="50%" y="50%" className="overflow-visible">
        {[false, true].map((major) =>
          GRID_STEPS.filter((step) => (step % 5 === 0) === major).map((step) => (
            <path
              key={step}
              d={`M${-reach} ${step * 18.08 - rise}L${reach} ${step * 18.08 + rise}M${-reach} ${step * 18.08 + rise}L${reach} ${step * 18.08 - rise}`}
              stroke={major ? '#cfcfcf' : '#ebebeb'}
              strokeWidth="1.200"
              fill="none"
            />
          ))
        )}
        <ellipse rx="10" ry="5" fill="none" stroke="#a9a9a9" strokeWidth="3" />
        <path d="M-6-5h12L0 0zM-6 5h12L0 0z" fill="#a9a9a9" />
        <path d={`M${-reach} ${-rise}L${reach} ${rise}`} stroke="#ff9b9b" strokeWidth="1.300" />
        <path d={`M${-reach} ${rise}L${reach} ${-rise}`} stroke="#9bf79b" strokeWidth="1.300" />
      </svg>
    </svg>
  );
}

function ViewCube() {
  return (
    <svg
      viewBox="0 0 100 116"
      className="absolute top-[22px] right-[20px] h-[116px] w-[100px] font-['Liberation_Sans',Arial,sans-serif]"
    >
      <defs>
        <radialGradient id="cubeShadow">
          <stop offset="0.300" stopColor="#999" stopOpacity="0.700" />
          <stop offset="1" stopColor="#999" stopOpacity="0" />
        </radialGradient>
      </defs>
      <ellipse cx="56" cy="75" rx="40" ry="20" fill="url(#cubeShadow)" />
      <path d="M10 26L49 10l40 17-39 21z" fill="#f6f6f6" />
      <path d="M10 26l40 22v46L14 70z" fill="#efefef" />
      <path d="M50 48l39-21-4 41-35 26z" fill="#e3e3e3" />
      <path d="M10 26L49 10l40 17-39 21zM50 48v46L14 70M89 27l-4 41-35 26" fill="none" stroke="#777" strokeWidth="0.800" />
      <path d="M9 19l5 51" stroke="#8c85ea" strokeWidth="2" />
      <path d="M14 70l42 29" stroke="#f09090" strokeWidth="2" />
      <text x="3" y="16" fontSize="14" fill="#8c85ea">Z</text>
      <text x="58" y="109" fontSize="14" fill="#f58a8a">X</text>
      <text transform="translate(32 23) rotate(25)" fontSize="8" fill="#666">SUPERIOR</text>
      <text transform="translate(15 56) rotate(34)" fontSize="8" fill="#666">FRONTAL</text>
      <text transform="translate(55 76) rotate(-33)" fontSize="8" fill="#666">DERECHA</text>
    </svg>
  );
}

function PanelGrip() {
  return <span className="h-[14px] w-1 border-x border-l-[#666] border-r-[#aaa]"></span>;
}

function FolderIcon() {
  return (
    <svg viewBox="0 0 20 18" className="h-[18px] w-5">
      <path d="M0 3h9l2-2h9v16H0zM0 0h8l-1 2H0z" fill="#999" />
    </svg>
  );
}

function EyeIcon({ hidden = false }: { hidden?: boolean }) {
  return (
    <svg viewBox="0 0 20 20" className="h-5 w-5" fill="none" stroke="#9a9a9a">
      <path d="M1 10q9-11 18 0-9 11-18 0z" fill={hidden ? 'none' : '#9a9a9a'} strokeWidth="1.300" />
      <circle cx="10" cy="10" r="3" stroke={hidden ? '#9a9a9a' : '#eee'} strokeWidth="1.500" />
      {hidden && <path d="M3 3l14 14" strokeWidth="1.500" />}
    </svg>
  );
}

function TreeRow({ label, children }: { label: string; children: React.ReactNode }) {
  return (
    <li className="flex h-[30px] items-center pl-[45px]">
      <button aria-label="Expandir" className="w-[23px]">
        <svg viewBox="0 0 12 18" className="h-[18px] w-3">
          <path d="M1 1h3l7 8-7 8H1z" fill="#eee" stroke="#333" strokeWidth="1.500" />
        </svg>
      </button>
      <div className="flex h-6 items-center bg-[#f1f1f1] pr-[11px] pl-[3px]">
        {children}
        <span className="pl-[18px]">{label}</span>
      </div>
    </li>
  );
}

function Navigator() {
  return (
    <section className="w-[375px]">
      <div className="flex h-[31px] items-center border border-[#bdbdbd] bg-[#f1f1f1] pr-[2px] pl-[5px]">
        <svg viewBox="0 0 13 8" className="h-2 w-[13px]">
          <path d="M6 0v8L0 4zM13 0v8L7 4z" fill="#333" />
        </svg>
        <h2 className="flex-1 pl-3 font-['Roboto',sans-serif] text-sm text-[#6f6f6f]">NAVEGADOR</h2>
        <button aria-label="Contraer" className="mr-2 flex h-3 w-3 items-center justify-center rounded-full bg-[#222]">
          <span className="h-[2px] w-[6px] bg-white"></span>
        </button>
        <PanelGrip />
      </div>
      <ul className="pt-1 font-['Liberation_Sans',Arial,sans-serif] text-[13px] text-[#333]">
        <li className="flex h-[30px] items-center pl-[21px]">
          <svg viewBox="0 0 15 15" className="h-[15px] w-[15px]">
            <path d="M14 1v13H1z" fill="#999" stroke="#333" />
          </svg>
          <div className="ml-[9px] flex h-6 items-center bg-[#f1f1f1] pr-[9px] pl-1">
            <EyeIcon />
            <div className="ml-[7px] flex h-5 items-center bg-[#999] pr-3 pl-[3px]">
              <svg viewBox="0 0 20 20" className="h-5 w-5">
                <path d="M1 5l4-4h14v14l-4 4H1z" fill="#e9e9ee" stroke="#444" />
                <path d="M1 5h14v14M15 5l4-4" fill="none" stroke="#bbb" />
              </svg>
              <span className="pl-[18px] text-sm font-bold text-white">(Sin guardar)</span>
            </div>
            <input
              type="radio"
              aria-label="Activar componente"
              defaultChecked
              className="ml-[5px] h-4 w-4 appearance-none rounded-full border-2 border-[#333] bg-[radial-gradient(#222_0_3px,#fff_3.5px)]"
            />
          </div>
        </li>
        <TreeRow label="Configuración del documento">
          <FaCog className="h-5 w-5 text-[#999]" />
        </TreeRow>
        <TreeRow label="Vistas guardadas">
          <FolderIcon />
        </TreeRow>
        <TreeRow label="Origen">
          <span className="mr-[11px]">
            <EyeIcon hidden />
          </span>
          <FolderIcon />
        </TreeRow>
      </ul>
    </section>
  );
}

function Canvas() {
  return (
    <main className="relative flex min-h-0 flex-1 flex-col justify-between overflow-hidden bg-white p-[5px]">
      <GroundGrid />
      <ViewCube />
      <div className="relative">
        <Navigator />
      </div>
      <div className="relative flex w-[375px] items-center border border-t-0 border-[#bdbdbd] bg-[#f1f1f1] pr-[2px] pl-[30px] font-['Roboto',sans-serif]">
        <h2 className="flex-1 text-[13px] leading-[30px] text-[#6f6f6f]">COMENTARIOS</h2>
        <button aria-label="Expandir comentarios" className="mr-2">
          <svg viewBox="0 0 12 12" className="h-3 w-3">
            <circle cx="6" cy="6" r="6" fill="#222" />
            <path d="M6 3v6M3 6h6" stroke="#fff" strokeWidth="1.500" />
          </svg>
        </button>
        <PanelGrip />
      </div>
      <div className="absolute bottom-[5px] left-1/2 flex h-[30px] -translate-x-1/2 items-center gap-[11px] bg-[#f1f1f1] px-1">
        {viewTools.map((tool) => (
          <button key={tool.name} aria-label={tool.name} className="flex items-center gap-[2px]">
            <tool.icon />
            {tool.menu && <Caret />}
          </button>
        ))}
      </div>
    </main>
  );
}

function Timeline() {
  const controls = [
    { name: 'Inicio', d: 'M1 1h2v18H1zM16 1v18L4 10z' },
    { name: 'Anterior', d: 'M13 2v16L1 10zM14 6h2v8h-2z' },
    { name: 'Reproducir', d: 'M2 0l15 10L2 20z' },
    { name: 'Siguiente', d: 'M4 2v16l12-8zM1 6h2v8H1z' },
    { name: 'Final', d: 'M1 1v18l12-9zM14 1h2v18h-2z' }
  ];
  return (
    <footer className="flex h-[62px] shrink-0 items-center border-t-2 border-[#cbcbcb] bg-[#f1f1f1] pr-4 pl-3">
      <div className="flex gap-[14px]">
        {controls.map((control) => (
          <button key={control.name} aria-label={control.name}>
            <svg viewBox="0 0 17 20" className="h-5 w-[17px]">
              <path d={control.d} fill="#505050" />
            </svg>
          </button>
        ))}
      </div>
      <svg viewBox="0 0 16 40" className="ml-4 h-10 w-4">
        <path d="M0 0h16v5L9 11v29H7V11L0 5z" fill="#6a6a6a" />
      </svg>
      <button aria-label="Configuración" className="ml-auto">
        <FaCog className="h-5 w-5 text-[#999]" />
      </button>
    </footer>
  );
}

function Taskbar() {
  return (
    <footer className="grid h-[60px] shrink-0 grid-cols-[1fr_auto_1fr] items-center bg-[linear-gradient(90deg,#202124_0%,#1c212c_12%,#222222_26%,#1f2125_40%,#12233f_46%,#16202f_52%,#2a1d1c_58%,#2a1c1c_63%,#222226_70%,#202126_100%)] font-['Open_Sans',sans-serif] text-sm leading-5 text-white">
      <div className="flex items-center gap-[9px] pl-7">
        <WeatherIcon />
        <div>
          <p>26°C</p>
          <p className="text-[#c8c8c8]">Muy nublado</p>
        </div>
      </div>
      <nav className="flex gap-[5px]">
        {taskbarApps.map((app) => (
          <button
            key={app.name}
            aria-label={app.name}
            className={`relative flex h-[50px] w-[50px] items-center justify-center rounded ${
              app.active ? 'bg-[#382b2d]' : ''
            }`}
          >
            <app.icon />
            {app.running && <span className="absolute bottom-px h-1 w-2 rounded-full bg-[#9c9696]"></span>}
            {app.active && <span className="absolute bottom-px h-1 w-5 rounded-full bg-[#d3a3dd]"></span>}
          </button>
        ))}
      </nav>
      <div className="flex items-center justify-end pr-5">
        <button aria-label="Iconos ocultos" className="mr-5">
          <ChevronUp className="h-6 w-6" strokeWidth={1.5} />
        </button>
        <button className="mr-6 text-center">
          ESP
          <br />
          LAA
        </button>
        <button aria-label="Red, volumen y batería" className="mr-5 flex gap-[10px]">
          <svg viewBox="0 0 20 20" className="h-5 w-5" fill="none" stroke="#fff" strokeWidth="1.500">
            <path d="M1 8q9-9 18 0M4 11q6-6 12 0M6.500 13.500q3.500-3 7 0" />
            <circle cx="10" cy="16" r="1.500" fill="#fff" stroke="none" />
          </svg>
          <svg viewBox="0 0 20 20" className="h-5 w-5" fill="none" stroke="#fff" strokeWidth="1.300">
            <path d="M1 7.500h3l5-4v13l-5-4H1zM12 7.500q2 2.500 0 5M14.500 5q4 5 0 10M17 3q5 7 0 14" />
          </svg>
          <svg viewBox="0 0 20 20" className="h-5 w-5" fill="none" stroke="#fff" strokeWidth="1.500">
            <rect x="1" y="4" width="16" height="12" rx="3" />
            <path d="M3 6h5v8H3zM17.500 8h2v4h-2z" fill="#fff" stroke="none" />
          </svg>
        </button>
        <button className="text-right">
          08:55
          <br />
          13/04/2022
        </button>
      </div>
    </footer>
  );
}

export default function App() {
  return (
    <div className="flex h-screen flex-col overflow-hidden bg-white">
      <TitleBar />
      <div className="flex min-h-0 flex-1">
        <DataPanel />
        <div className="flex min-w-0 flex-1 flex-col">
          <TabStrip />
          <Ribbon />
          <Canvas />
          <Timeline />
        </div>
      </div>
      <Taskbar />
    </div>
  );
}
